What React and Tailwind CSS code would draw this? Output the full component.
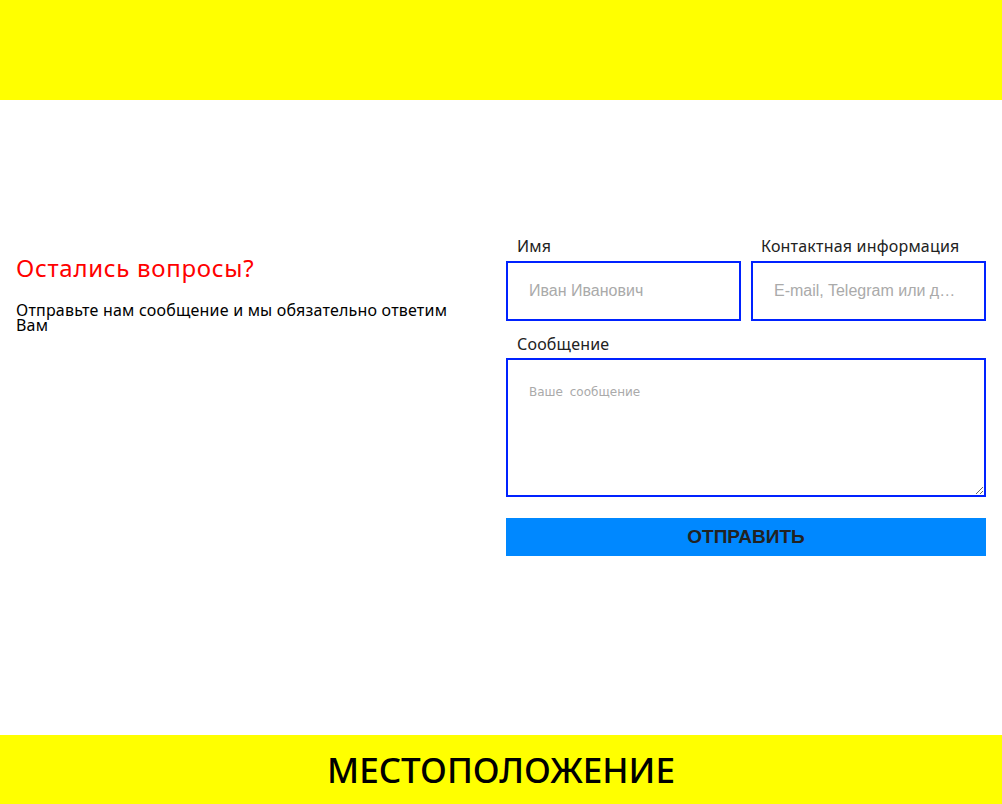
export default function App() {
  const font = { fontFamily: "'Noto Sans', sans-serif" };
  return (
    <div className="min-h-screen bg-white" style={font}>
      <header className="h-[100px] bg-[#ffff00]"></header>

      <section className="h-[635px] px-4 pt-[136px] flex">
        <div className="w-[490px] pt-[18px] pr-[26px]">
          <h2 className="text-[24px] leading-7 text-[#ff0000] tracking-[0.7px]">Остались вопросы?</h2>
          <p className="mt-[21px] text-[16px] leading-[15px] text-black tracking-[0.2px]">
            Отправьте нам сообщение и мы обязательно ответим Вам
          </p>
        </div>

        <form className="w-[480px]" onSubmit={(e) => e.preventDefault()}>
          <div className="flex gap-[10px]">
            <label className="flex-1 block">
              <span className="block pl-[11px] text-[16px] leading-5 text-[#222] tracking-[0.2px]">Имя</span>
              <input
                className="mt-[5px] w-full h-[60px] border-2 border-[#0022ff] px-[21px] text-[16px] outline-none placeholder:text-[#aaa]"
                style={{ fontFamily: "'Liberation Sans', Arial, sans-serif" }}
                placeholder="Иван Иванович"
              />
            </label>
            <label className="flex-1 block">
              <span className="block pl-[10px] text-[16px] leading-5 text-[#222] tracking-[0.2px]">Контактная информация</span>
              <input
                className="mt-[5px] w-full h-[60px] border-2 border-[#0022ff] px-[21px] text-[16px] outline-none placeholder:text-[#aaa] text-ellipsis"
                style={{ fontFamily: "'Liberation Sans', Arial, sans-serif" }}
                placeholder="E-mail, Telegram или другой мессенджер"
              />
            </label>
          </div>

          <label className="block mt-[13px]">
            <span className="block pl-[11px] text-[16px] leading-5 text-[#222] tracking-[0.2px]">Сообщение</span>
            <textarea
              className="block mt-[4px] w-full h-[139px] border-2 border-[#0022ff] px-[21px] pt-[23px] text-[12px] outline-none placeholder:text-[#aaa]"
              style={{ fontFamily: "'DejaVu Sans', sans-serif", wordSpacing: "3px" }}
              placeholder="Ваше сообщение"
            />
          </label>

          <button
            type="submit"
            className="mt-[21px] w-full h-[38px] bg-[#0088ff] text-[19px] font-bold text-[#222]"
            style={{ fontFamily: "'Liberation Sans', Arial, sans-serif" }}
          >
            ОТПРАВИТЬ
          </button>
        </form>
      </section>

      <footer className="h-[69px] bg-[#ffff00] flex items-center justify-center">
        <h2 className="text-[35px] leading-none text-black font-medium">МЕСТОПОЛОЖЕНИЕ</h2>
      </footer>
    </div>
  );
}
